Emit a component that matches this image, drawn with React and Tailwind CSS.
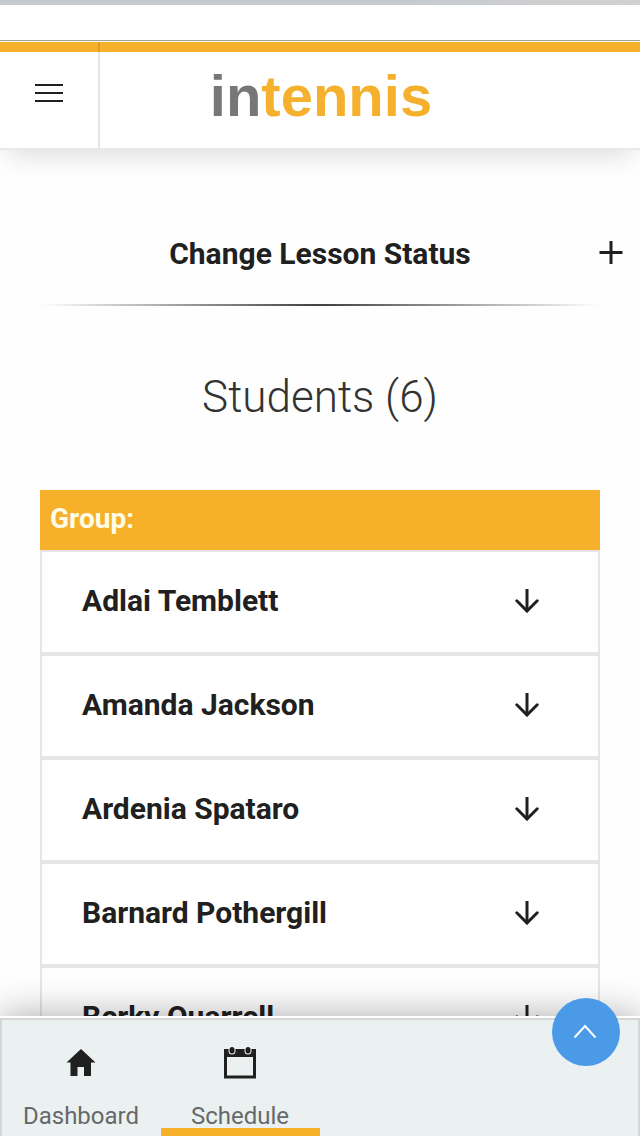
import React from "react";

const students = [
  "Adlai Temblett",
  "Amanda Jackson",
  "Ardenia Spataro",
  "Barnard Pothergill",
  "Berky Quarrell",
];

function ArrowDown() {
  return (
    <svg width="24" height="24" viewBox="0 0 24 24" fill="none" stroke="currentColor" strokeWidth="3" aria-hidden="true">
      <path d="M12 0v22" />
      <path d="M1.800 11.800 12 22l10.200-10.200" strokeLinecap="round" />
    </svg>
  );
}

function HomeIcon() {
  return (
    <svg width="30" height="28" viewBox="0 0 30 28" fill="currentColor" aria-hidden="true">
      <path d="M15 0 0.500 13.500H4.500V27H11.500V18H18V27H25V13.500H29.500Z" />
    </svg>
  );
}

function CalendarIcon() {
  return (
    <svg width="32" height="32" viewBox="0 0 32 32" aria-hidden="true">
      <path fill="currentColor" fillRule="evenodd" d="M0 2H32V31.500H0ZM3 10V28.500H29V10Z" />
      <rect x="4.500" y="-2" width="7" height="9.500" rx="3.500" fill="#ebf1f1" />
      <rect x="20.500" y="-2" width="7" height="9.500" rx="3.500" fill="#ebf1f1" />
      <rect x="5.500" y="0" width="5" height="6.500" rx="2.500" fill="currentColor" />
      <rect x="21.500" y="0" width="5" height="6.500" rx="2.500" fill="currentColor" />
    </svg>
  );
}

function Header() {
  return (
    <header className="relative z-10 shrink-0 bg-white shadow-[0_14px_24px_-8px_rgba(0,0,0,0.13)]">
      <div className="h-[5px] bg-linear-to-r from-[#c5cace] via-[#c5cace] via-60% to-[#d2d1d2]" />
      <div className="h-9 border-b border-[#a3a39e]" />
      <div className="mt-px grid h-[108px] grid-cols-[100px_1fr_100px] border-b-2 border-[#e9e9e9] bg-linear-to-b from-[#f6b02a] from-[10px] to-white to-[10px]">
        <button type="button" aria-label="Open menu" className="flex items-center justify-center border-r-2 border-black/10 pb-1 text-[#202020]">
          <svg width="28" height="18" viewBox="0 0 28 18" stroke="currentColor" strokeWidth="2" aria-hidden="true">
            <path d="M0 1H28M0 9H28M0 17H28" />
          </svg>
        </button>
        <a href="#home" className="flex items-center justify-center pt-0.5 pl-0.5 font-['Liberation_Sans',sans-serif] text-[58px] leading-none font-bold text-[#f5b12d]">
          <span className="text-[#777777]">in</span>tennis
        </a>
      </div>
    </header>
  );
}

function StudentRow({ name }) {
  return (
    <li className="border-2 border-[#e5e5e5] bg-white">
      <button type="button" className="flex h-[100px] w-full items-center justify-between pr-[59px] pb-0.5 pl-10 text-left text-[30px] leading-9 font-bold">
        <span>{name}</span>
        <ArrowDown />
      </button>
    </li>
  );
}

function BottomNav() {
  return (
    <footer className="relative z-10 shrink-0 border-t-2 border-white bg-[#ebf1f1] shadow-[0_0_36px_rgba(0,0,0,0.34)]">
      <nav className="grid h-[118px] grid-cols-4 border-x-2 border-t-2 border-[#d2d7d7] text-2xl leading-6 text-[#666969]">
        <a href="#dashboard" className="flex flex-col items-center pt-[29px] pr-px">
          <span className="flex h-[55px] shrink-0 text-[#202020]"><HomeIcon /></span>
          <span>Dashboard</span>
        </a>
        <a href="#schedule" aria-current="page" className="flex flex-col items-center border-b-8 border-[#f6b02a] pt-[27px] pr-px">
          <span className="flex h-[57px] shrink-0 text-[#202020]"><CalendarIcon /></span>
          <span>Schedule</span>
        </a>
      </nav>
      <button type="button" aria-label="Back to top" className="absolute -top-5 right-5 flex size-[68px] items-center justify-center rounded-full bg-[#4a9ae8] pr-0.5 pb-0.5 text-white">
        <svg width="24" height="16" viewBox="0 0 24 16" fill="none" stroke="currentColor" strokeWidth="2" aria-hidden="true">
          <path d="M1.500 14.500 12 3 22.500 14.500" />
        </svg>
      </button>
    </footer>
  );
}

export default function App() {
  return (
    <div className="flex h-dvh flex-col overflow-hidden bg-[#fefefe] font-[Roboto,sans-serif] text-[#202020]">
      <Header />
      <main className="min-h-0 flex-1 overflow-y-auto px-10 pt-20 [scrollbar-width:none]">
        <button type="button" className="-mx-10 grid h-[74px] w-[calc(100%+80px)] grid-cols-[60px_1fr_60px] items-start text-[30px] leading-[48px] font-bold">
          <span className="col-start-2">Change Lesson Status</span>
          <span className="flex h-[46px] items-center justify-center pl-0.5">
            <svg width="24" height="24" viewBox="0 0 24 24" stroke="currentColor" strokeWidth="3" aria-hidden="true">
              <path d="M0.500 11.500H23.500M12 0V23" />
            </svg>
          </span>
        </button>
        <hr className="h-[2px] border-0 bg-linear-to-r from-transparent via-[#404040] to-transparent" />
        <h1 className="pt-16 text-center text-[44px] leading-[54px] font-light text-[#333333]">Students (6)</h1>
        <section className="pt-[66px]">
          <h2 className="h-[60px] bg-[#f6b02a] px-[10px] text-[28px] leading-[58px] font-bold text-[#fffde8]">Group:</h2>
          <ul>
            {students.map((name) => (
              <StudentRow key={name} name={name} />
            ))}
          </ul>
        </section>
      </main>
      <BottomNav />
    </div>
  );
}
